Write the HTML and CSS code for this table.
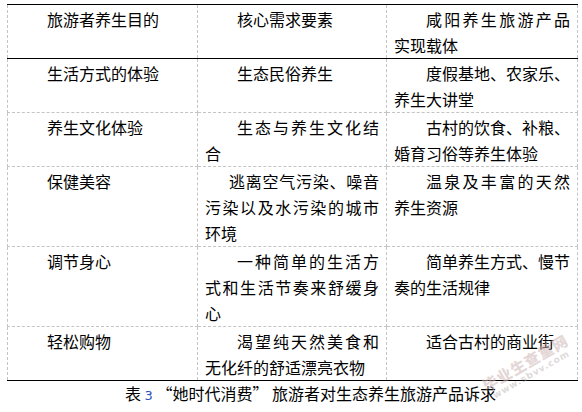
FILE: index.html
```html
<!DOCTYPE html>
<html lang="zh-CN">
<head>
<meta charset="utf-8">
<title>表3</title>
<link rel="stylesheet" href="styles.css">
</head>
<body>
<div class="page">
  <table class="grid">
    <colgroup>
      <col class="c1">
      <col class="c2">
      <col class="c3">
    </colgroup>
    <tr class="head">
      <td><span class="ln i">旅游者养生目的</span></td>
      <td><span class="ln i">核心需求要素</span></td>
      <td><span class="ln i j">咸阳养生旅游产品</span><span class="ln">实现载体</span></td>
    </tr>
    <tr>
      <td><span class="ln i">生活方式的体验</span></td>
      <td><span class="ln i">生态民俗养生</span></td>
      <td><span class="ln i">度假基地、农家乐、</span><span class="ln">养生大讲堂</span></td>
    </tr>
    <tr>
      <td><span class="ln i">养生文化体验</span></td>
      <td><span class="ln i j">生态与养生文化结</span><span class="ln">合</span></td>
      <td><span class="ln i">古村的饮食、补粮、</span><span class="ln">婚育习俗等养生体验</span></td>
    </tr>
    <tr>
      <td><span class="ln i">保健美容</span></td>
      <td><span class="ln is j">逃离空气污染、噪音</span><span class="ln j">污染以及水污染的城市</span><span class="ln">环境</span></td>
      <td><span class="ln i j">温泉及丰富的天然</span><span class="ln">养生资源</span></td>
    </tr>
    <tr>
      <td><span class="ln i">调节身心</span></td>
      <td><span class="ln i j">一种简单的生活方</span><span class="ln j">式和生活节奏来舒缓身</span><span class="ln">心</span></td>
      <td><span class="ln i">简单养生方式、慢节</span><span class="ln">奏的生活规律</span></td>
    </tr>
    <tr class="last">
      <td><span class="ln i">轻松购物</span></td>
      <td><span class="ln i j">渴望纯天然美食和</span><span class="ln">无化纤的舒适漂亮衣物</span></td>
      <td><span class="ln i">适合古村的商业街</span></td>
    </tr>
  </table>
  <p class="caption">表 <span class="num">3</span> “她时代消费” 旅游者对生态养生旅游产品诉求</p>
  <div class="watermark">
    <span class="wm-main">毕业生查重网</span>
    <span class="wm-url">www.sbvv.com</span>
  </div>
</div>
</body>
</html>
```

FILE: styles.css
```css
html, body {
  margin: 0;
  padding: 0;
  background: #ffffff;
}

body {
  font-family: "Noto Sans CJK SC", "Noto Sans", sans-serif;
  font-size: 16px;
  color: #000000;
}

.page {
  position: relative;
  width: 582px;
  height: 412px;
  overflow: hidden;
  padding: 4px 0 0 7px;
  box-sizing: border-box;
}

.grid {
  border-collapse: collapse;
  table-layout: fixed;
  width: 570px;
  border-top: 1px solid #000000;
  border-bottom: 1px solid #000000;
  border-left: 1px dashed #c4c4c4;
  border-right: 1px dashed #c4c4c4;
}

.c1 { width: 190px; }
.c2 { width: 189px; }
.c3 { width: 191px; }

.grid td {
  vertical-align: top;
  padding: 1px 7px 0 7px;
  line-height: 26px;
  border-left: 1px dashed #c4c4c4;
  border-right: 1px dashed #c4c4c4;
  border-bottom: 1px dashed #c4c4c4;
}

.grid tr.head td {
  border-bottom: 1px solid #000000;
}

.grid tr.last td {
  border-bottom: 1px solid #000000;
}

.ln {
  display: block;
  white-space: nowrap;
}

.i {
  text-indent: 32px;
}

.is {
  text-indent: 24px;
}

.j {
  text-align: justify;
  text-align-last: justify;
}

.caption {
  margin: 0;
  padding-left: 118px;
  line-height: 24px;
  font-size: 16px;
}

.num {
  font-family: "DejaVu Sans", "Liberation Sans", sans-serif;
  font-size: 13px;
  color: #2f4fb8;
}

.watermark {
  position: absolute;
  left: 474px;
  top: 382px;
  width: 112px;
  transform: rotate(-30deg);
  transform-origin: left top;
  pointer-events: none;
}

.wm-main {
  display: block;
  font-size: 15px;
  font-weight: 900;
  letter-spacing: 1px;
  line-height: 17px;
  color: rgba(205, 180, 180, 0.55);
  padding-left: 6px;
}

.wm-url {
  display: block;
  font-family: "DejaVu Sans", sans-serif;
  font-size: 9px;
  font-weight: 700;
  line-height: 11px;
  letter-spacing: 1px;
  color: rgba(190, 180, 180, 0.5);
  padding-left: 10px;
}
```
